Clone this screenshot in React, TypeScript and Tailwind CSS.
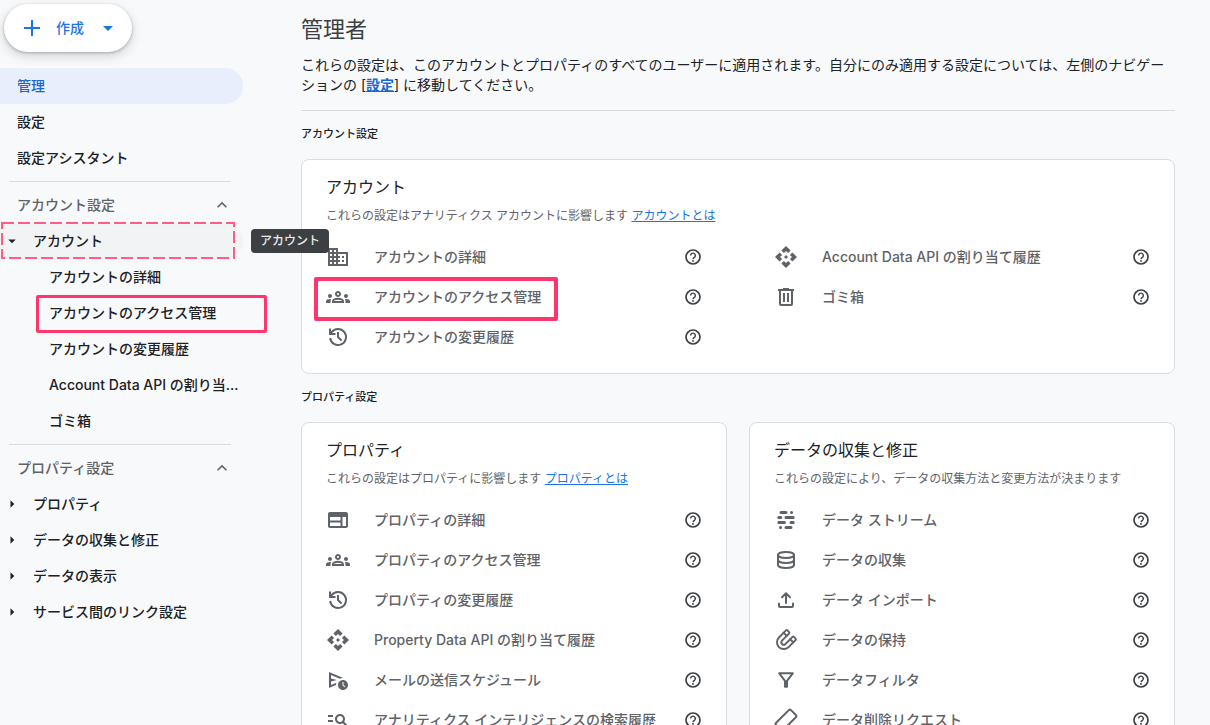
import type { ReactNode } from "react";
import {
  MdApi,
  MdArrowDropDown,
  MdArrowRight,
  MdBusiness,
  MdKeyboardArrowUp,
  MdManageSearch,
  MdOutlineGroups,
  MdOutlineScheduleSend,
  MdOutlineWeb,
} from "react-icons/md";

function Glyph({ children }: { children: ReactNode }) {
  return (
    <svg
      viewBox="0 0 24 24"
      className="size-6 shrink-0"
      fill="none"
      stroke="currentColor"
      strokeWidth="2"
      strokeLinecap="round"
      strokeLinejoin="round"
      aria-hidden="true"
    >
      {children}
    </svg>
  );
}

const HelpIcon = () => (
  <svg viewBox="0 0 24 24" className="size-5" aria-hidden="true">
    <circle cx="12" cy="12" r="8.4" fill="none" stroke="currentColor" strokeWidth="2" />
    <path
      d="M9.2 10.2a2.8 2.8 0 1 1 4.7 2c-1 .9-1.9 1.3-1.9 2.5"
      fill="none"
      stroke="currentColor"
      strokeWidth="1.7"
    />
    <circle cx="12" cy="16.7" r="1.1" fill="currentColor" />
  </svg>
);

const HistoryIcon = () => (
  <Glyph>
    <path d="M4.1 13A8 8 0 1 0 5.6 7.2L4.2 8.8" strokeLinecap="butt" />
    <path d="M4 3.5V9h5.5M12 7v5l3.6 3.6" strokeLinecap="butt" strokeLinejoin="miter" />
  </Glyph>
);

const TrashIcon = () => (
  <Glyph>
    <path d="M4 5h16M9 4h6" strokeLinecap="butt" />
    <path d="M6 5v14a1 1 0 0 0 1 1h10a1 1 0 0 0 1-1V5" />
    <path d="M10 8v9M14 8v9" strokeLinecap="butt" />
  </Glyph>
);

const StreamIcon = () => (
  <Glyph>
    <path
      strokeWidth="3"
      d="M7 4.5h5M17.5 4.5h.1M4.8 9.5h2M12 9.5h7.2M4.8 14.5h5.6M17 14.5h2.2M6.5 19.5h.1M12 19.5h5"
    />
  </Glyph>
);

const DatabaseIcon = () => (
  <Glyph>
    <ellipse cx="12" cy="7" rx="8" ry="3" />
    <path d="M4 7v10c0 1.7 3.6 3 8 3s8-1.3 8-3V7" />
    <path d="M4 12c0 1.7 3.6 3 8 3s8-1.3 8-3" />
  </Glyph>
);

const UploadIcon = () => (
  <Glyph>
    <path d="M12 15V5.5M8 9.2l4-4 4 4M5 15.5V18a1 1 0 0 0 1 1h12a1 1 0 0 0 1-1v-2.5" />
  </Glyph>
);

const MagnetIcon = () => (
  <Glyph>
    <g transform="rotate(45 12 12)" strokeWidth="1.9">
      <path d="M6.2 4.2h2.4a1 1 0 0 1 1 1v10a2.4 2.4 0 0 0 4.8 0v-10a1 1 0 0 1 1-1h2.4a1 1 0 0 1 1 1v10a6.8 6.8 0 0 1-13.6 0v-10a1 1 0 0 1 1-1z" />
      <path d="M5.2 8.6h4.4M14.4 8.6h4.4" />
    </g>
  </Glyph>
);

const FilterIcon = () => (
  <Glyph>
    <path d="M5.2 5.3h13.6L13 12.8v5.9h-2v-5.9z" />
  </Glyph>
);

const EraserIcon = () => (
  <Glyph>
    <rect x="7" y="1.5" width="10" height="21" rx="1.5" transform="rotate(45 12 12)" />
  </Glyph>
);

type Item = { icon: ReactNode; label: string; marked?: boolean };

const accountLeft: Item[] = [
  { icon: <MdBusiness size={24} />, label: "アカウントの詳細" },
  { icon: <MdOutlineGroups size={24} />, label: "アカウントのアクセス管理", marked: true },
  { icon: <HistoryIcon />, label: "アカウントの変更履歴" },
];

const accountRight: Item[] = [
  { icon: <MdApi size={24} />, label: "Account Data API の割り当て履歴" },
  { icon: <TrashIcon />, label: "ゴミ箱" },
];

const propertyItems: Item[] = [
  { icon: <MdOutlineWeb size={24} />, label: "プロパティの詳細" },
  { icon: <MdOutlineGroups size={24} />, label: "プロパティのアクセス管理" },
  { icon: <HistoryIcon />, label: "プロパティの変更履歴" },
  { icon: <MdApi size={24} />, label: "Property Data API の割り当て履歴" },
  { icon: <MdOutlineScheduleSend size={24} />, label: "メールの送信スケジュール" },
  { icon: <MdManageSearch size={24} />, label: "アナリティクス インテリジェンスの検索履歴" },
];

const dataItems: Item[] = [
  { icon: <StreamIcon />, label: "データ ストリーム" },
  { icon: <DatabaseIcon />, label: "データの収集" },
  { icon: <UploadIcon />, label: "データ インポート" },
  { icon: <MagnetIcon />, label: "データの保持" },
  { icon: <FilterIcon />, label: "データフィルタ" },
  { icon: <EraserIcon />, label: "データ削除リクエスト" },
];

function ItemList({ items }: { items: Item[] }) {
  return (
    <ul className="-mr-px">
      {items.map((item) => (
        <li key={item.label} className="relative flex h-10 items-center justify-between">
          <a href="#" className="flex min-w-0 items-center gap-6 text-sm font-medium text-[#5f6368]">
            {item.icon}
            <span className="whitespace-nowrap">{item.label}</span>
          </a>
          <button type="button" aria-label={`${item.label}のヘルプ`} className="text-[#3c4043]">
            <HelpIcon />
          </button>
          {item.marked && (
            <span className="pointer-events-none absolute top-0 -left-3 h-11 w-[244px] rounded-xs border-4 border-[#ff366b]" />
          )}
        </li>
      ))}
    </ul>
  );
}

function Card({ title, note, children }: { title: string; note: ReactNode; children: ReactNode }) {
  return (
    <section className="rounded-lg border border-[#dadce0] bg-white px-6 pt-[15px] pb-4">
      <h3 className="text-base leading-6 text-[#202124]">{title}</h3>
      <p className="mt-[7px] mb-[11px] text-xs leading-5 text-[#5f6368]">{note}</p>
      {children}
    </section>
  );
}

function SectionLabel({ children }: { children: ReactNode }) {
  return (
    <h2 className="pt-[15px] pb-[17px] text-[11px] leading-4 font-medium text-[#202124]">{children}</h2>
  );
}

function NavLink({ label, active }: { label: string; active?: boolean }) {
  return (
    <a
      href="#"
      className={
        active
          ? "flex h-9 items-center rounded-r-full bg-[#e8eefc] pl-[17px] text-[#1967d2]"
          : "flex h-9 items-center pl-[17px]"
      }
    >
      {label}
    </a>
  );
}

function NavGroup({ label }: { label: string }) {
  return (
    <button type="button" className="flex h-9 w-full items-center justify-between pr-[11px] pl-[17px] text-[#5f6368]">
      {label}
      <MdKeyboardArrowUp size={20} />
    </button>
  );
}

function NavBranch({ label }: { label: string }) {
  return (
    <button type="button" className="flex h-9 w-full items-center gap-3 pl-[3px]">
      <MdArrowRight size={18} />
      {label}
    </button>
  );
}

function NavLeaf({ label, title, marked }: { label: string; title?: string; marked?: boolean }) {
  return (
    <a href="#" title={title} className="relative flex h-9 items-center pl-[49px] whitespace-nowrap">
      {label}
      {marked && (
        <span className="pointer-events-none absolute top-0 -right-6 left-9 h-[38px] rounded-xs border-3 border-[#ff366b]" />
      )}
    </a>
  );
}

const Divider = () => <hr className="my-[5px] mr-3 ml-[9px] border-[#dadce0]" />;

export default function App() {
  return (
    <div className="flex h-screen overflow-hidden bg-[#f8f9fb] font-['Inter','Noto_Sans_CJK_JP',sans-serif] text-[#202124]">
      <nav className="w-[243px] shrink-0 text-sm font-medium">
        <button
          type="button"
          className="mt-1 mb-4 ml-1 flex h-12 w-32 items-center rounded-full bg-white pl-5 text-[#1a73e8] shadow-[0_1px_3px_rgba(60,64,67,0.35),0_4px_8px_2px_rgba(60,64,67,0.15)]"
        >
          <svg viewBox="0 0 16 16" className="size-4" stroke="currentColor" strokeWidth="2" aria-hidden="true">
            <path d="M8 0v16M0 8h16" />
          </svg>
          <span className="ml-4">作成</span>
          <MdArrowDropDown size={24} className="ml-3" />
        </button>
        <NavLink label="管理" active />
        <NavLink label="設定" />
        <NavLink label="設定アシスタント" />
        <Divider />
        <NavGroup label="アカウント設定" />
        <div className="relative">
          <button type="button" className="flex h-9 w-full items-center gap-3 rounded-r-full bg-[#f1f3f4] pl-[3px]">
            <MdArrowDropDown size={18} />
            アカウント
          </button>
          <svg
            className="pointer-events-none absolute -top-px left-px h-[37px] w-[234px]"
            fill="none"
            stroke="#ff5c88"
            strokeWidth="2"
            strokeDasharray="12 4"
            aria-hidden="true"
          >
            <rect x="1" y="1" width="232" height="35" />
          </svg>
          <div
            role="tooltip"
            className="absolute top-[6px] left-[251px] z-10 rounded bg-[#3c4043] px-[9px] text-xs leading-6 whitespace-nowrap text-[#e8eaed]"
          >
            アカウント
          </div>
        </div>
        <NavLeaf label="アカウントの詳細" />
        <NavLeaf label="アカウントのアクセス管理" marked />
        <NavLeaf label="アカウントの変更履歴" />
        <NavLeaf label="Account Data API の割り当..." title="Account Data API の割り当て履歴" />
        <NavLeaf label="ゴミ箱" />
        <Divider />
        <NavGroup label="プロパティ設定" />
        <NavBranch label="プロパティ" />
        <NavBranch label="データの収集と修正" />
        <NavBranch label="データの表示" />
        <NavBranch label="サービス間のリンク設定" />
      </nav>

      <main className="min-w-0 flex-1 pt-[15px] pr-[35px] pl-[58px]">
        <h1 className="text-[22px] leading-7 text-[#3c4043]">管理者</h1>
        <p className="mt-3 text-sm leading-5">
          これらの設定は、このアカウントとプロパティのすべてのユーザーに適用されます。自分にのみ適用する設定については、左側のナビゲーションの [
          <a href="#" className="font-bold text-[#1967d2] underline">
            設定
          </a>
          ] に移動してください。
        </p>
        <hr className="mt-[15px] border-[#dadce0]" />

        <SectionLabel>アカウント設定</SectionLabel>
        <Card
          title="アカウント"
          note={
            <>
              これらの設定はアナリティクス アカウントに影響します{" "}
              <a href="#" className="text-[#1a73e8] underline">
                アカウントとは
              </a>
            </>
          }
        >
          <div className="grid grid-cols-2 gap-x-[72px]">
            <ItemList items={accountLeft} />
            <ItemList items={accountRight} />
          </div>
        </Card>

        <SectionLabel>プロパティ設定</SectionLabel>
        <div className="grid grid-cols-2 gap-x-[22px]">
          <Card
            title="プロパティ"
            note={
              <>
                これらの設定はプロパティに影響します{" "}
                <a href="#" className="text-[#1a73e8] underline">
                  プロパティとは
                </a>
              </>
            }
          >
            <ItemList items={propertyItems} />
          </Card>
          <Card title="データの収集と修正" note="これらの設定により、データの収集方法と変更方法が決まります">
            <ItemList items={dataItems} />
          </Card>
        </div>
      </main>
    </div>
  );
}
